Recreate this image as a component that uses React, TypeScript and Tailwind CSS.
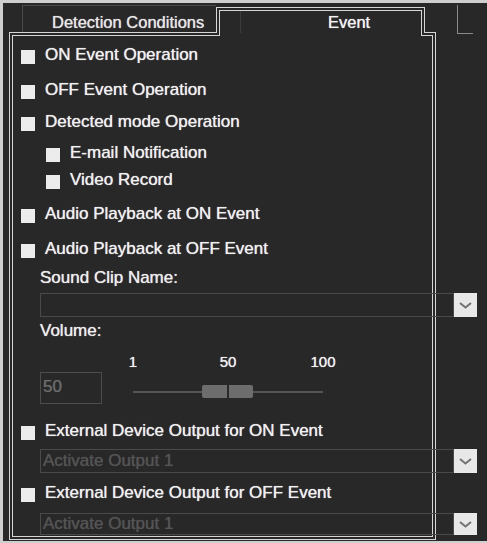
import React from "react";

const line = "border-[#d6d6d6]";

function CheckRow({ label, sub = false, top = "" }: { label: string; sub?: boolean; top?: string }) {
  return (
    <div className={`flex h-[20px] shrink-0 items-start ${top}`}>
      <span className={`mt-[5px] h-[14px] w-[14px] shrink-0 bg-[#ececec] ${sub ? "ml-[25px]" : ""}`} />
      <span className="ml-[10px] whitespace-nowrap text-[#f0f0f0]">{label}</span>
    </div>
  );
}

function Select({ value = "", top, h }: { value?: string; top: string; h: string }) {
  return (
    <div className={`ml-[19px] flex w-[437px] shrink-0 ${top} ${h}`}>
      <div className="flex flex-1 items-center border border-[#4a4a4a] pl-[2px] whitespace-nowrap text-[#545454]">
        {value}
      </div>
      <div className="flex w-[23px] items-center justify-center bg-[#e8e8e8]">
        <svg width="13" height="7" viewBox="0 0 13 7">
          <path d="M1 1l5.5 4.5L12 1" stroke="#727272" strokeWidth="2" fill="none" />
        </svg>
      </div>
    </div>
  );
}

export default function App() {
  return (
    <div className="h-[543px] w-[487px] overflow-hidden border-b-[2px] border-l-[3px] border-t-[3px] border-[#cfcfcf] bg-[#282828] font-['Liberation_Sans',Arial,sans-serif] text-[17px] leading-[20px] [text-shadow:0_0_0.8px_currentColor]">
      <div className="ml-[6px] w-[427px]">
        {/* tabs */}
        <div className="flex h-[29px] items-end">
          <div className="ml-[13px] h-[27px] w-[194px] shrink-0 whitespace-nowrap border-l border-t border-[#4a4a4a] pl-[29px] pt-[6px] text-[16.5px] text-[#e6e6e6]">
            Detection Conditions
          </div>
          <div className={`relative z-10 -mb-px h-[26px] w-[209px] shrink-0 border border-b-0 ${line} bg-[#282828] px-[2px] pt-[2px]`}>
            <div className={`relative h-[26px] border border-b-0 ${line} bg-[#282828] pl-[108px] pt-px text-[16.5px] text-[#f2f2f2]`}>
              <span className="absolute left-[20px] top-0 h-[22px] border-l border-[#3c3c3c]" />
              Event
            </div>
          </div>
          <div className="-mb-[2px] ml-[32px] h-[29px] w-[16px] shrink-0 border-b border-l border-[#8a8a8a]" />
        </div>

        {/* panel */}
        <div className={`h-[508px] border ${line} p-[2px]`}>
          <div className={`flex h-full flex-col border ${line} pl-[8px] pt-[9px]`}>
            <CheckRow label="ON Event Operation" />
            <CheckRow label="OFF Event Operation" top="mt-[15px]" />
            <CheckRow label="Detected mode Operation" top="mt-[12px]" />
            <CheckRow label="E-mail Notification" sub top="mt-[11px]" />
            <CheckRow label="Video Record" sub top="mt-[7px]" />
            <CheckRow label="Audio Playback at ON Event" top="mt-[14px]" />
            <CheckRow label="Audio Playback at OFF Event" top="mt-[15px]" />

            <div className="ml-[19px] mt-[9px] h-[20px] shrink-0 text-[#ededed]">Sound Clip Name:</div>
            <Select top="mt-[5px]" h="h-[24px]" />

            <div className="ml-[19px] mt-[4px] h-[20px] shrink-0 text-[#ededed]">Volume:</div>

            <div className="ml-[19px] mt-[12px] flex shrink-0 items-start">
              <div className="mt-[19px] h-[32px] w-[62px] shrink-0 border border-[#4c4c4c] pl-[2px] pt-[4px] text-[#6a6a6a]">
                50
              </div>
              <div className="ml-[31px] w-[190px] shrink-0">
                <div className="flex h-[18px] justify-between text-[15px] leading-[18px] text-[#f0f0f0]">
                  {["1", "50", "100"].map((v) => (
                    <div key={v} className="flex w-0 justify-center">
                      {v}
                    </div>
                  ))}
                </div>
                <div className="relative mt-[14px] flex h-[13px] items-center">
                  <div className="h-[2px] w-full bg-[#555555]" />
                  <div className="absolute left-[69px] top-0 flex h-[13px] w-[51px] justify-center rounded-[2px] bg-[#6d6d6d]">
                    <div className="h-full w-[2px] bg-[#2a2a2a]" />
                  </div>
                </div>
              </div>
            </div>

            <CheckRow label="External Device Output for ON Event" top="mt-[17px]" />
            <Select value="Activate Output 1" top="mt-[8px]" h="h-[24px]" />
            <CheckRow label="External Device Output for OFF Event" top="mt-[10px]" />
            <Select value="Activate Output 1" top="mt-[10px]" h="h-[22px]" />
          </div>
        </div>
      </div>
    </div>
  );
}
